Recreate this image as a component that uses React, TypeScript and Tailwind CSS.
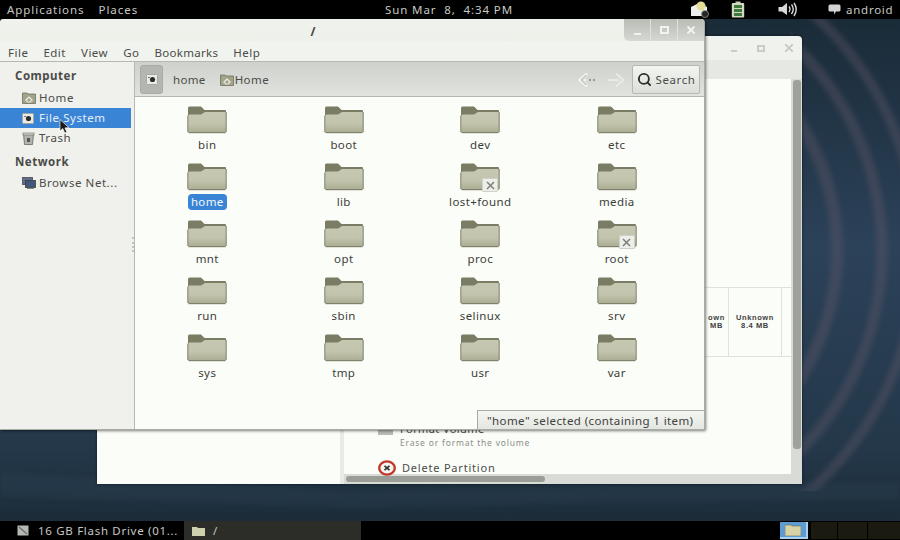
import { Search } from 'lucide-react';

const font = 'font-["Noto_Sans",sans-serif]';

const folders = [
  { name: 'bin' }, { name: 'boot' }, { name: 'dev' }, { name: 'etc' },
  { name: 'home', selected: true }, { name: 'lib' }, { name: 'lost+found', locked: true }, { name: 'media' },
  { name: 'mnt' }, { name: 'opt' }, { name: 'proc' }, { name: 'root', locked: true },
  { name: 'run' }, { name: 'sbin' }, { name: 'selinux' }, { name: 'srv' },
  { name: 'sys' }, { name: 'tmp' }, { name: 'usr' }, { name: 'var' },
];

function FolderIcon() {
  return (
    <svg width="40" height="28" viewBox="0 0 40 28">
      <defs>
        <linearGradient id="folderBody" x1="0" y1="0" x2="0" y2="1">
          <stop offset="0" stopColor="#c6c8b2" />
          <stop offset="0.55" stopColor="#c2c4ac" />
          <stop offset="1" stopColor="#a9ac92" />
        </linearGradient>
      </defs>
      <path d="M1 2 Q1 0.5 2.5 0.5 H14 L17.5 4 H38 Q39 4 39 5 V10 H1 Z" fill="#7a7c64" />
      <path d="M1 10 Q1 8.5 3 8.5 H14 L18 6 H38 Q39 6 39 7 V25.5 Q39 27 37.5 27 H2.5 Q1 27 1 25.5 Z" fill="url(#folderBody)" />
      <path d="M1.5 26.7 H38.5 M0.8 9.5 V26 M39.2 6 V26" stroke="#6f7159" strokeWidth="0.9" fill="none" />
    </svg>
  );
}

function FolderItem({ name, selected, locked }: { name: string; selected?: boolean; locked?: boolean }) {
  return (
    <div className="flex flex-col items-center h-[57px]">
      <div className="relative h-[28px] w-[40px]">
        <FolderIcon />
        {locked && (
          <div className="absolute left-[22px] top-[15px] h-[14px] w-[16px] bg-[#eceee9] border border-[#cfd1c8] rounded-[1px] flex items-center justify-center">
            <svg width="9" height="9" viewBox="0 0 9 9">
              <path d="M1 1 L8 8 M8 1 L1 8" stroke="#7d7f7a" strokeWidth="1.5" />
            </svg>
          </div>
        )}
      </div>
      <div className={selected
        ? 'mt-[3px] h-[16px] px-[3px] rounded-[4px] bg-[#3a84d6] text-[#f4f8fb] text-[11.5px] leading-[16px] tracking-[0.35px]'
        : 'mt-[3px] h-[16px] px-[3px] text-[#3c3e3a] text-[11.5px] leading-[16px] tracking-[0.4px]'}>
        {name}
      </div>
    </div>
  );
}

function HomeIcon() {
  return (
    <svg width="14" height="12" viewBox="0 0 14 12">
      <path d="M0.5 1 H5 L6 2 H13.5 V11.5 H0.5 Z" fill="#a3a48c" stroke="#6f7058" strokeWidth="0.8" />
      <path d="M3.5 8.5 L7 5 L10.5 8.5" fill="none" stroke="#f1f1e6" strokeWidth="1.1" />
      <path d="M5 8 V10 H9 V8" fill="none" stroke="#f1f1e6" strokeWidth="0.9" />
    </svg>
  );
}

function DriveIcon() {
  return (
    <svg width="12" height="11" viewBox="0 0 12 11">
      <rect x="0.5" y="0.5" width="11" height="10" rx="1" fill="#e9ebe7" stroke="#a5a7a2" />
      <circle cx="6.5" cy="5.5" r="2.6" fill="#2c2d2c" />
      <rect x="2" y="3" width="2" height="1" fill="#77797a" />
    </svg>
  );
}

function SideRow({ icon, label, active }: { icon: React.ReactNode; label: string; active?: boolean }) {
  return (
    <div className={active
      ? 'h-[20px] w-[131px] bg-[#3a84d6] flex items-center pl-[22px] text-[#e6f0f8]'
      : 'h-[20px] w-[131px] flex items-center pl-[22px] text-[#4a4c49]'}>
      <span className="w-[17px] flex items-center">{icon}</span>
      <span className="text-[11.5px] tracking-[0.55px] whitespace-nowrap">{label}</span>
    </div>
  );
}

function Wallpaper() {
  return (
    <svg className="absolute inset-0 h-full w-full" viewBox="0 0 900 500" preserveAspectRatio="none">
      <defs>
        <linearGradient id="wall" x1="0" y1="0" x2="0" y2="1">
          <stop offset="0" stopColor="#1a2b38" />
          <stop offset="0.45" stopColor="#2c4259" />
          <stop offset="0.85" stopColor="#24384a" />
          <stop offset="1" stopColor="#1c2c39" />
        </linearGradient>
        <filter id="soft"><feGaussianBlur stdDeviation="2.5" /></filter>
        <clipPath id="rightSide"><rect x="790" y="0" width="110" height="470" /></clipPath>
      </defs>
      <rect width="900" height="500" fill="url(#wall)" />
      <g clipPath="url(#rightSide)">
        <g fill="none" stroke="#6a5c6c" strokeOpacity="0.34" filter="url(#soft)">
          <circle cx="600" cy="231" r="237" strokeWidth="12" />
          <circle cx="600" cy="231" r="282" strokeWidth="11" />
          <circle cx="600" cy="231" r="318" strokeWidth="10" />
        </g>
      </g>
      <path d="M0 452 L350 470 L900 462 V478 L350 486 L0 476 Z" fill="#2f4558" opacity="0.3" filter="url(#soft)" />
    </svg>
  );
}

function BackWindow() {
  return (
    <div className="absolute left-[97px] top-[17px] h-[448px] w-[705px] rounded-t-[4px] bg-[#f0f2ed] shadow-[0_0_3px_rgba(0,0,0,0.6)] flex flex-col overflow-hidden">
      <div className="h-[24px] shrink-0 flex items-center justify-end gap-[20px] pr-[9px] text-[#c4c6c0]">
        <span className="h-[2px] w-[6px] bg-[#c9cbc5] mt-[6px]" />
        <span className="h-[7px] w-[8px] border-2 border-[#c9cbc5]" />
        <svg width="8" height="8" viewBox="0 0 8 8"><path d="M0 0 L8 8 M8 0 L0 8" stroke="#c9cbc5" strokeWidth="2" /></svg>
      </div>
      <div className="h-[19px] shrink-0 bg-[#e6e8e3]" />
      <div className="flex-1 flex min-h-0">
        <div className="w-[243px] bg-[#fbfdf8] shrink-0" />
        <div className="w-[4px] bg-[#e8eae5] shrink-0" />
        <div className="flex-1 flex flex-col min-w-0 relative">
          <div className="flex-1 flex min-h-0">
            <div className="flex-1 bg-[#fbfdf8] flex flex-col min-w-0">
              <div className="h-[208px] shrink-0" />
              <div className="h-[70px] shrink-0 border-y border-[#dfe1dc] flex justify-end font-['Liberation_Sans',sans-serif]">
                <div className="w-[24px] border-r border-[#dfe1dc] flex flex-col items-center justify-center text-[7.5px] font-bold leading-[8px] tracking-[0.6px] text-[#3f413e]">
                  <span>own</span><span>MB</span>
                </div>
                <div className="w-[53px] border-r border-[#dfe1dc] flex flex-col items-center justify-center text-[7.5px] font-bold leading-[8px] tracking-[0.6px] text-[#3f413e]">
                  <span>Unknown</span><span>8.4 MB</span>
                </div>
                <div className="w-[9px]" />
              </div>
              <div className="flex-1 relative pl-[34px]">
                <div className="h-[65px]" />
                <div className="absolute left-[34px] top-[73px] h-[5px] w-[15px] bg-[#b9bbb5]" />
                <div className="pl-[22px] text-[11px] leading-[14px] text-[#4b4d4a] tracking-[0.4px]">Format Volume</div>
                <div className="pl-[22px] mt-[1px] text-[8.5px] leading-[12px] text-[#8b8d89] tracking-[0.8px] whitespace-nowrap">Erase or format the volume</div>
                <div className="flex items-center gap-[6px] mt-[11px]">
                  <svg width="18" height="16" viewBox="0 0 18 16">
                    <ellipse cx="9" cy="8" rx="7.8" ry="6.6" fill="#f6f3ef" stroke="#c0392f" strokeWidth="2.4" />
                    <path d="M6.5 5.8 L11.5 10.2 M11.5 5.8 L6.5 10.2" stroke="#2f3330" strokeWidth="1.7" />
                  </svg>
                  <span className="text-[11px] tracking-[0.8px] text-[#4b4d4a]">Delete Partition</span>
                </div>
              </div>
            </div>
            <div className="w-[11px] shrink-0 bg-[#d9dbd6] flex justify-center pt-[1px]">
              <div className="h-[369px] w-[8px] rounded-[3px] bg-[#9ea29a]" />
            </div>
          </div>
          <div className="h-[10px] shrink-0 bg-[#d9dbd6] flex items-center pl-[2px]">
            <div className="h-[6px] w-[199px] rounded-[3px] bg-[#9b9e97]" />
          </div>
        </div>
      </div>
    </div>
  );
}

function MainWindow() {
  return (
    <div className="absolute left-0 top-0 h-[411px] w-[705px] rounded-t-[4px] bg-[#f1f3ee] border-r border-b border-[#a9aba5] shadow-[1px_1px_3px_rgba(0,0,0,0.5)] flex flex-col overflow-hidden">
      <div className="h-[22px] shrink-0 relative bg-gradient-to-b from-[#f0f2ed] to-[#eef0ea]">
        <div className="w-[626px] text-center text-[12px] font-bold leading-[26px] text-[#444]">/</div>
        <div className="absolute right-0 top-0 h-[22px] w-[80px] rounded-bl-[5px] bg-gradient-to-b from-[#b9bbb5] to-[#d6d8d3] flex text-white">
          <div className="w-[27px] flex items-end justify-center pb-[6px] border-r border-[#e0e2dd]"><span className="h-[2px] w-[7px] bg-[#f3f4f0]" /></div>
          <div className="w-[27px] flex items-center justify-center border-r border-[#e0e2dd]"><span className="h-[8px] w-[9px] border-2 border-[#f3f4f0]" /></div>
          <div className="flex-1 flex items-center justify-center">
            <svg width="8" height="8" viewBox="0 0 8 8"><path d="M0.5 0.5 L7.5 7.5 M7.5 0.5 L0.5 7.5" stroke="#f3f4f0" strokeWidth="2" /></svg>
          </div>
        </div>
      </div>
      <div className="h-[21px] shrink-0 flex items-center gap-[15px] pl-[8px] pt-[3px] text-[11.5px] tracking-[0.5px] text-[#4a4c49] border-b border-[#b6b8b2]">
        <span>File</span><span>Edit</span><span>View</span><span>Go</span><span className="tracking-[0.3px]">Bookmarks</span><span>Help</span>
      </div>
      <div className="flex-1 flex min-h-0">
        <div className="w-[135px] shrink-0 bg-[#f0f0ec] border-r border-[#b6b8b2] relative">
          <div className="pl-[15px] pt-[5px] h-[26px] text-[11.5px] font-bold tracking-[0.5px] text-[#4a4c49]">Computer</div>
          <SideRow icon={<HomeIcon />} label="Home" />
          <SideRow active icon={<DriveIcon />} label="File System" />
          <SideRow icon={
            <svg width="13" height="13" viewBox="0 0 13 13">
              <path d="M1.5 2 H11.5 L10.5 12.5 H2.5 Z" fill="#b2b4ae" stroke="#666862" strokeWidth="0.8" />
              <rect x="1" y="1" width="11" height="2" fill="#d8dad4" stroke="#666862" strokeWidth="0.6" />
              <rect x="5" y="6" width="3" height="4" fill="#54564f" />
            </svg>
          } label="Trash" />
          <div className="pl-[15px] pt-[5px] h-[25px] text-[11.5px] font-bold tracking-[0.5px] text-[#4a4c49]">Network</div>
          <SideRow icon={
            <svg width="14" height="12" viewBox="0 0 14 12">
              <rect x="0.5" y="0.5" width="10" height="7" fill="#5c6f8c" stroke="#4a4c49" strokeWidth="0.8" />
              <rect x="3.5" y="3.5" width="10" height="7" fill="#41587c" stroke="#3c3e3b" strokeWidth="0.8" />
              <rect x="5" y="11" width="7" height="1" fill="#8a8c87" />
            </svg>
          } label="Browse Net..." />
          {/* mouse pointer */}
          <svg className="absolute left-[59px] top-[57px]" width="11" height="15" viewBox="0 0 11 15">
            <path d="M1 0.5 V12 L3.8 9.6 L5.8 14 L7.8 13 L5.9 8.9 L9.8 8.6 Z" fill="#1a1a1a" stroke="#f2f2f2" strokeWidth="0.7" />
          </svg>
          <div className="absolute right-0 top-[175px] h-[15px] w-[2px] border-l-2 border-dotted border-[#c2c4be]" />
        </div>
        <div className="flex-1 flex flex-col min-w-0 relative">
          <div className="h-[35px] shrink-0 bg-gradient-to-b from-[#cfd1cc] to-[#e1e3de] border-b border-[#b6b8b2] flex items-center pl-[5px] pr-[4px] pt-[1px]">
            <div className="h-[29px] w-[23px] rounded-[3px] bg-[#b4b6b1] border border-[#a9aba5] flex items-center justify-center">
              <DriveIcon />
            </div>
            <span className="ml-[10px] text-[11.5px] tracking-[0.35px] text-[#4a4c49]">home</span>
            <span className="ml-[14px]"><HomeIcon /></span>
            <span className="ml-[1px] text-[11.5px] tracking-[0.4px] text-[#4a4c49]">Home</span>
            <div className="ml-auto flex items-center gap-[9px]">
              <svg width="20" height="16" viewBox="0 0 20 16">
                <path d="M9 1.5 L1.5 8 L9 14.5 M6 8 H8 M11 8 H12 M15 8 H17" fill="none" stroke="#f4f5f1" strokeWidth="2.2" />
                <path d="M8 3 L3 8 L8 13" fill="none" stroke="#a7a9a3" strokeWidth="0.8" />
                <circle cx="12" cy="8" r="1.2" fill="#9b9d97" /><circle cx="16" cy="8" r="1.2" fill="#9b9d97" />
              </svg>
              <svg width="18" height="16" viewBox="0 0 18 16">
                <path d="M9 1.5 L16.5 8 L9 14.5 M1 8 H12" fill="none" stroke="#e9ebe6" strokeWidth="2" />
              </svg>
              <div className="ml-[-2px] h-[29px] w-[68px] rounded-[2px] bg-gradient-to-b from-[#f3f5f0] to-[#dcded9] border border-[#b6b8b2] flex items-center justify-center gap-[4px]">
                <Search size={15} strokeWidth={3} className="text-[#2d2f2d]" />
                <span className="text-[11.5px] tracking-[0.6px] text-[#4a4c49]">Search</span>
              </div>
            </div>
          </div>
          <div className="flex-1 bg-[#fbfdf8] pl-[4px] pt-[9px]">
            <div className="grid grid-cols-4 w-[546px]">
              {folders.map((f) => <FolderItem key={f.name} name={f.name} selected={f.selected} locked={f.locked} />)}
            </div>
          </div>
          <div className="absolute right-0 bottom-0 h-[19px] w-[227px] bg-gradient-to-b from-[#f4f6f1] to-[#e4e6e1] border-l border-t border-[#a9aba5] flex items-center pl-[9px] pt-[1px] text-[11.5px] tracking-[0.4px] text-[#3f413e] whitespace-nowrap">
            "home" selected (containing 1 item)
          </div>
        </div>
      </div>
    </div>
  );
}

export default function App() {
  return (
    <div className={`${font} h-[540px] w-[900px] flex flex-col overflow-hidden bg-black`}>
      <div className="h-[19px] shrink-0 bg-black relative flex items-center text-[#c6c8c4] text-[11.5px] tracking-[0.95px]">
        <span className="ml-[7px]">Applications</span>
        <span className="ml-[14px]">Places</span>
        <span className="absolute left-[385px] top-0 leading-[19px] tracking-[0.9px] whitespace-nowrap">{'Sun Mar \u00a08, \u00a04:34 PM'}</span>
        <div className="absolute left-[690px] top-[1px]">
          <svg width="20" height="17" viewBox="0 0 20 17">
            <path d="M1 6 L9 2 L17 6 V15 H1 Z" fill="#eef0ee" />
            <circle cx="11" cy="5" r="4.5" fill="#e3dd96" />
            <circle cx="15" cy="13" r="3.5" fill="#24262a" stroke="#8f918c" strokeWidth="0.8" />
          </svg>
        </div>
        <div className="absolute left-[731px] top-[1px]">
          <svg width="14" height="17" viewBox="0 0 14 17">
            <rect x="4.5" y="0.5" width="5" height="2" fill="#c9ceb7" />
            <rect x="0.8" y="2" width="12.4" height="14.5" rx="1" fill="#d3d8c1" />
            <rect x="3" y="4" width="8" height="3" fill="#3d7a3d" />
            <rect x="3" y="8" width="8" height="3" fill="#3d7a3d" />
            <rect x="3" y="12" width="8" height="3" fill="#3d7a3d" />
          </svg>
        </div>
        <div className="absolute left-[778px] top-[2px]">
          <svg width="20" height="15" viewBox="0 0 20 15">
            <path d="M0.5 5 H4 L9 1 V13 L4 9.5 H0.5 Z" fill="#d7d9d6" />
            <path d="M11 4.5 Q13 7 11 10 M13.5 2.5 Q17 7 13.5 12 M16 1 Q20.5 7 16 14" fill="none" stroke="#d7d9d6" strokeWidth="1.4" />
          </svg>
        </div>
        <div className="absolute left-[828px] top-[4px]">
          <svg width="13" height="11" viewBox="0 0 13 11">
            <path d="M2 0.5 H11 Q12.5 0.5 12.5 2 V6 Q12.5 7.5 11 7.5 H8 L6 10.5 V7.5 H2 Q0.5 7.5 0.5 6 V2 Q0.5 0.5 2 0.5 Z" fill="#d2d4d1" />
          </svg>
        </div>
        <span className="absolute left-[846px] top-0 leading-[19px] tracking-[0.75px]">android</span>
      </div>
      <div className="flex-1 relative overflow-hidden">
        <Wallpaper />
        <BackWindow />
        <MainWindow />
      </div>
      <div className="h-[19px] shrink-0 bg-black flex items-stretch text-[#c6c8c4] text-[11.5px] tracking-[0.7px]">
        <div className="w-[184px] flex items-center pl-[17px] gap-[9px]">
          <svg width="12" height="11" viewBox="0 0 12 11">
            <rect x="0.5" y="0.5" width="11" height="10" fill="#b6b9b3" />
            <path d="M2 2 L10 9" stroke="#70726d" strokeWidth="1.5" />
          </svg>
          <span className="whitespace-nowrap">16 GB Flash Drive (01...</span>
        </div>
        <div className="w-[177px] bg-[#2c2c29] flex items-center pl-[8px] gap-[8px]">
          <svg width="13" height="10" viewBox="0 0 13 10">
            <path d="M0 1 H5 L6 2 H13 V10 H0 Z" fill="#cfd0ae" />
          </svg>
          <span>/</span>
        </div>
        <div className="flex-1" />
        <div className="relative w-[28px] my-[1px] bg-[#5d9bd0] border-r-2 border-b-2 border-[#a9d2ee] flex items-center justify-center">
          <svg width="16" height="12" viewBox="0 0 16 12">
            <path d="M0 1 H6 L7 2 H16 V12 H0 Z" fill="#d8d3a4" stroke="#6b6e5a" strokeWidth="0.6" />
          </svg>
        </div>
        <div className="w-[3px]" />
        <div className="w-[27px] my-[1px] bg-[#1a1a10] border-r border-black" />
        <div className="w-[30px] my-[1px] bg-[#1a1a10] border-r border-black" />
        <div className="w-[32px] my-[1px] bg-[#1a1a10]" />
      </div>
    </div>
  );
}
